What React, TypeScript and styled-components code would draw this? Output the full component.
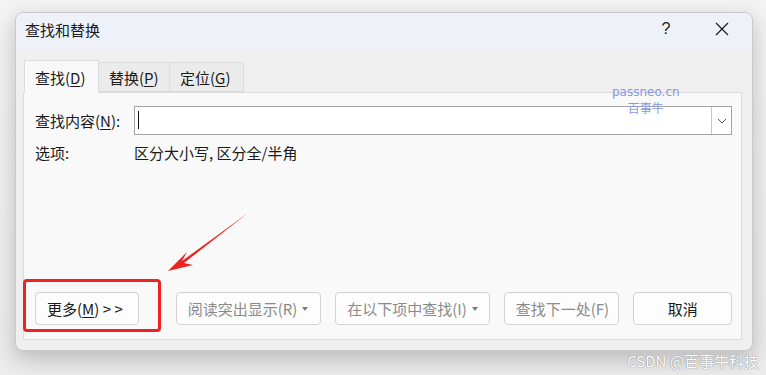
import styled, { createGlobalStyle } from "styled-components";

const GlobalStyle = createGlobalStyle`
  html, body {
    margin: 0;
    padding: 0;
    background: #f1f1f1;
  }
  body {
    font-family: "Noto Sans CJK SC", "Noto Sans", sans-serif;
    font-size: 15px;
    color: #1a1a1a;
  }
`;

const Page = styled.div`
  position: relative;
  width: 766px;
  height: 375px;
  padding: 12px 0 0 15px;
  box-sizing: border-box;
  overflow: hidden;
  background: linear-gradient(#f3f3f3, #ececec);
`;

const Dialog = styled.div`
  width: 738px;
  height: 339px;
  box-sizing: border-box;
  border: 1px solid #c9c9c9;
  border-radius: 8px;
  background: #efefef;
  box-shadow: 0 8px 22px rgba(0, 0, 0, 0.22);
  overflow: hidden;
  display: flex;
  flex-direction: column;
`;

const TitleBar = styled.div`
  height: 36px;
  flex: none;
  display: flex;
  align-items: center;
  padding: 0 0 4px 9px;
  box-sizing: border-box;
  background: #eef2f8;
`;

const Title = styled.div`
  flex: 1;
  font-size: 15px;
  color: #1a1a1a;
`;

const TitleButton = styled.div<{ $w: number }>`
  width: ${(p) => p.$w}px;
  height: 32px;
  display: flex;
  align-items: center;
  justify-content: center;
  font-family: "Liberation Sans", sans-serif;
  font-size: 16px;
  color: #1a1a1a;
`;

const Body = styled.div`
  flex: 1;
  display: flex;
  flex-direction: column;
  padding: 11px 10px 10px 7px;
`;

const Tabs = styled.div`
  display: flex;
  align-items: flex-end;
  height: 32px;
  padding-left: 1px;
`;

const Tab = styled.div<{ $w: number; $active?: boolean }>`
  width: ${(p) => p.$w}px;
  height: ${(p) => (p.$active ? 33 : 30)}px;
  box-sizing: border-box;
  display: flex;
  align-items: center;
  padding-left: 10px;
  background: ${(p) => (p.$active ? "#f9f9f9" : "#ebebeb")};
  border: 1px solid #dcdcdc;
  border-bottom: ${(p) => (p.$active ? "none" : "1px solid #dcdcdc")};
  border-left-width: ${(p) => (p.$active ? 1 : 0)}px;
  margin-bottom: ${(p) => (p.$active ? -1 : 0)}px;
  position: relative;
  z-index: ${(p) => (p.$active ? 1 : 0)};
`;

const U = styled.span`
  text-decoration: underline;
  text-underline-offset: 2px;
`;

const Panel = styled.div`
  flex: 1;
  display: flex;
  flex-direction: column;
  background: #f9f9f9;
  border: 1px solid #dcdcdc;
  padding: 13px 9px 14px 11px;
`;

const FieldRow = styled.div`
  display: flex;
  align-items: center;
  height: 29px;
`;

const Label = styled.div`
  width: 99px;
  flex: none;
`;

const ComboBox = styled.div`
  flex: 1;
  height: 29px;
  box-sizing: border-box;
  display: flex;
  border: 1px solid #a3a3a3;
  background: #ffffff;
`;

const Caret = styled.div`
  width: 1px;
  height: 18px;
  margin: 4px 0 0 3px;
  background: #111;
`;

const Spacer = styled.div`
  flex: 1;
`;

const DropButton = styled.div`
  width: 20px;
  box-sizing: border-box;
  border-left: 1px solid #c8c8c8;
  display: flex;
  align-items: center;
  justify-content: center;
`;

const OptionsRow = styled.div`
  display: flex;
  align-items: center;
  margin-top: 7px;
  height: 20px;
`;

const ButtonRow = styled.div`
  margin-top: auto;
  display: flex;
  align-items: center;
`;

const Button = styled.div<{ $w: number; $gap: number; $disabled?: boolean; $center?: boolean }>`
  width: ${(p) => p.$w}px;
  height: 33px;
  margin-left: ${(p) => p.$gap}px;
  box-sizing: border-box;
  display: flex;
  align-items: center;
  justify-content: ${(p) => (p.$center ? "center" : "flex-start")};
  gap: 5px;
  padding-left: ${(p) => (p.$center ? 0 : 11)}px;
  border: 1px solid #d3d3d3;
  border-radius: 4px;
  background: #fdfdfd;
  color: ${(p) => (p.$disabled ? "#8a8a8a" : "#1a1a1a")};
  white-space: pre;
`;

const Tri = styled.span`
  width: 0;
  height: 0;
  border-left: 3.5px solid transparent;
  border-right: 3.5px solid transparent;
  border-top: 4px solid #7a7a7a;
  margin-top: 1px;
`;

const Highlight = styled.div`
  position: absolute;
  left: 23px;
  top: 279px;
  width: 138px;
  height: 53px;
  box-sizing: border-box;
  border: 3px solid #ec2320;
  border-radius: 4px;
`;

const Arrow = styled.svg`
  position: absolute;
  left: 160px;
  top: 205px;
`;

const Watermark = styled.div`
  position: absolute;
  left: 612px;
  top: 85px;
  display: flex;
  flex-direction: column;
  align-items: center;
  color: #8797e6;
  line-height: 15px;
`;

const WmSite = styled.div`
  font-family: "DejaVu Sans", sans-serif;
  font-size: 12px;
`;

const WmName = styled.div`
  font-size: 12px;
`;

const Credit = styled.div`
  position: absolute;
  right: 7px;
  bottom: 4px;
  font-size: 15px;
  color: #ffffff;
  text-shadow: 0 0 1px #8a8a8a, 0 0 1px #8a8a8a;
`;

export default function App() {
  return (
    <Page>
      <GlobalStyle />
      <Dialog>
        <TitleBar>
          <Title>查找和替换</Title>
          <TitleButton $w={52}>?</TitleButton>
          <TitleButton $w={60}>
            <svg width="14" height="14" viewBox="0 0 14 14">
              <path d="M1 1L13 13M13 1L1 13" stroke="#1a1a1a" strokeWidth="1.2" />
            </svg>
          </TitleButton>
        </TitleBar>
        <Body>
          <Tabs>
            <Tab $w={75} $active>
              <span>
                查找(<U>D</U>)
              </span>
            </Tab>
            <Tab $w={71}>
              <span>
                替换(<U>P</U>)
              </span>
            </Tab>
            <Tab $w={74}>
              <span>
                定位(<U>G</U>)
              </span>
            </Tab>
          </Tabs>
          <Panel>
            <FieldRow>
              <Label>
                查找内容(<U>N</U>):
              </Label>
              <ComboBox>
                <Caret />
                <Spacer />
                <DropButton>
                  <svg width="10" height="6" viewBox="0 0 10 6">
                    <path d="M1 1L5 5L9 1" fill="none" stroke="#555" strokeWidth="1" />
                  </svg>
                </DropButton>
              </ComboBox>
            </FieldRow>
            <OptionsRow>
              <Label>选项:</Label>
              <div>区分大小写, 区分全/半角</div>
            </OptionsRow>
            <ButtonRow>
              <Button $w={104} $gap={0}>
                <span>
                  更多(<U>M</U>) &gt; &gt;
                </span>
              </Button>
              <Button $w={146} $gap={37} $disabled>
                <span>阅读突出显示(R)</span>
                <Tri />
              </Button>
              <Button $w={155} $gap={14} $disabled>
                <span>在以下项中查找(I)</span>
                <Tri />
              </Button>
              <Button $w={116} $gap={14} $disabled>
                <span>查找下一处(F)</span>
              </Button>
              <Button $w={99} $gap={14} $center>
                <span>取消</span>
              </Button>
            </ButtonRow>
          </Panel>
        </Body>
      </Dialog>
      <Watermark>
        <WmSite>passneo.cn</WmSite>
        <WmName>百事牛</WmName>
      </Watermark>
      <Highlight />
      <Arrow width="100" height="75" viewBox="0 0 100 75">
        <path d="M88 8 L22 56 L27 47 L8 66 L33 60 L24 58 Z" fill="#ec2320" />
      </Arrow>
      <Credit>CSDN @百事牛科技</Credit>
    </Page>
  );
}
